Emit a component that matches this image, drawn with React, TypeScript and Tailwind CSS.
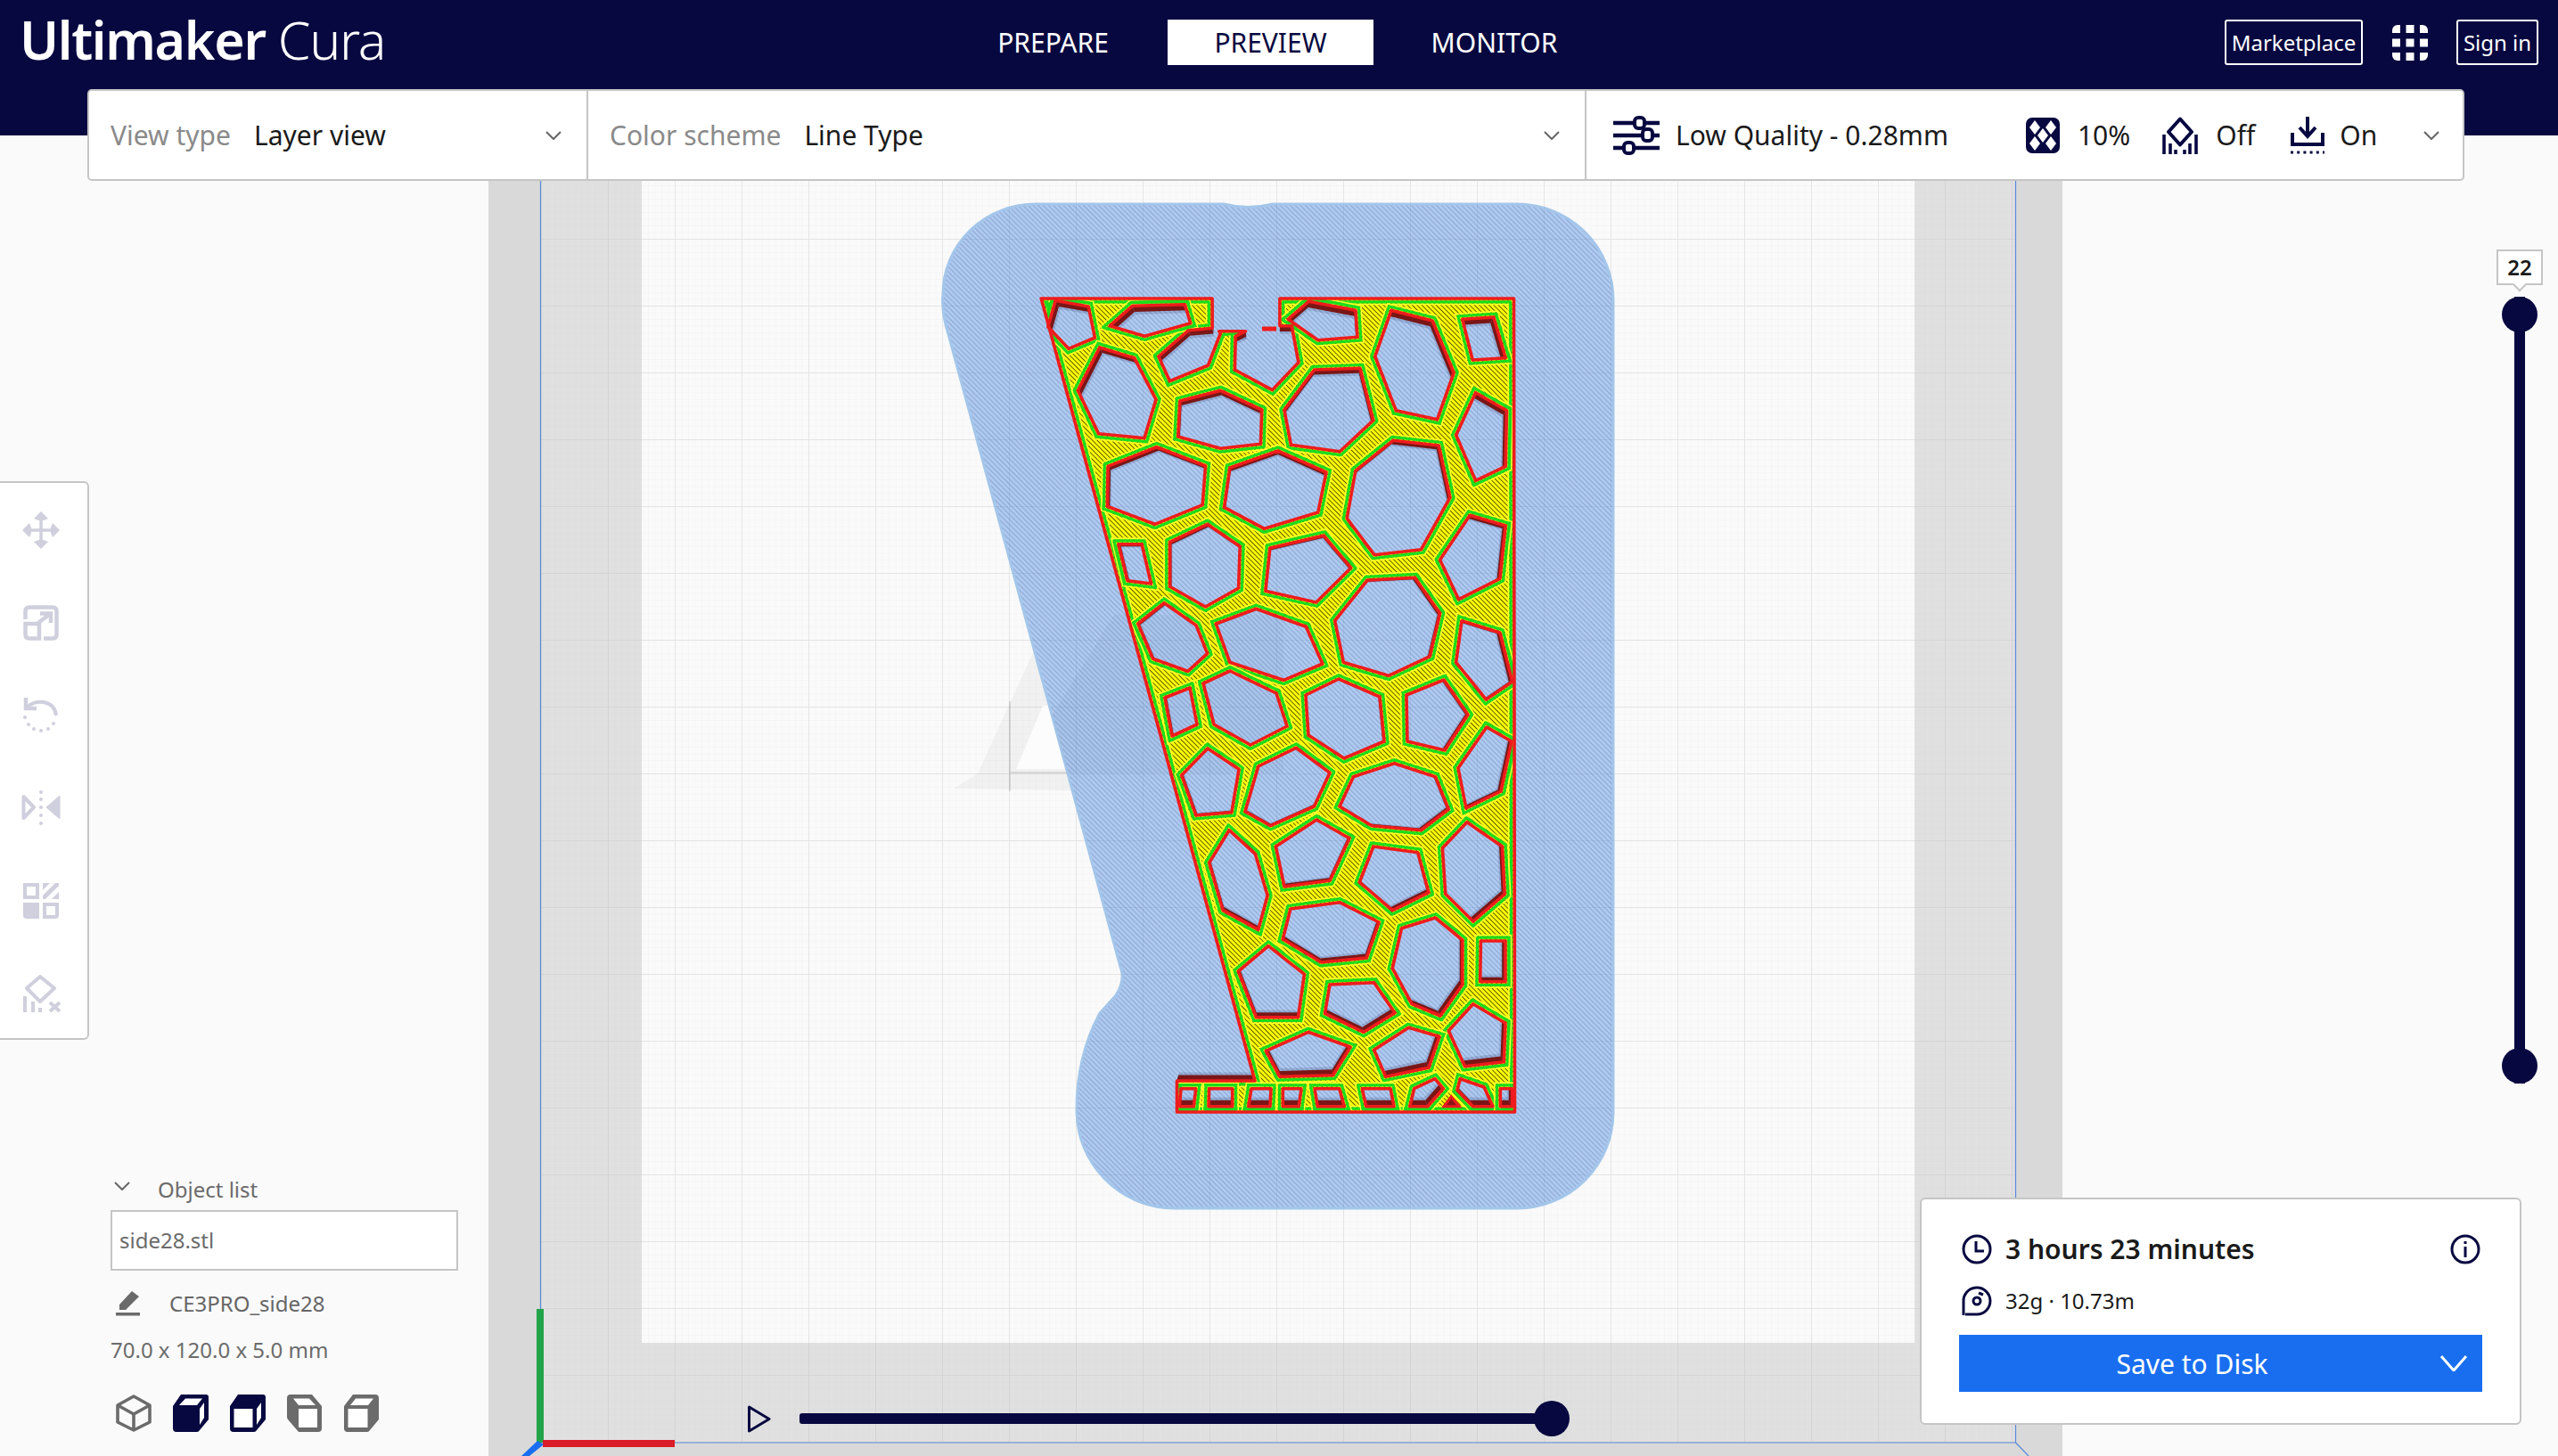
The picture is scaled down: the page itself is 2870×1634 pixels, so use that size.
import React from "react";

type Pt = number[];

const NAVY = "#070840";

// the zoomed crops had different scales, so the hole points are noted per crop
const a = (p: Pt[]) => p.map(([x, y]) => [1100 + x / 2.376, 300 + y / 3]);
const b = (p: Pt[]) => p.map(([x, y]) => [1200 + x / 2.904, 780 + y / 3]);
const c = (p: Pt[]) => p.map(([x, y]) => [1280 + x / 3, 1000 + y / 3]);

const outline: Pt[] = [
  ...a([[162, 105], [618, 105], [618, 205], [555, 212], [475, 300], [505, 383], [607, 330], [640, 222], [636, 215], [707, 215], [680, 232], [678, 345], [778, 413], [848, 320], [830, 197], [798, 197], [798, 105], [1422, 105]]),
  [1699.5, 1248], [1320.5, 1248], [1320.5, 1213], [1408, 1213],
];

const holes: Pt[][] = [
  a([[200, 112], [288, 132], [305, 237], [235, 274], [180, 200]]),
  a([[405, 130], [545, 125], [560, 188], [438, 232], [345, 197]]),
  a([[875, 115], [1000, 145], [1005, 235], [900, 245], [820, 175]]),
  a([[1095, 145], [1205, 180], [1262, 355], [1218, 512], [1108, 482], [1052, 300]]),
  a([[1285, 175], [1368, 168], [1400, 305], [1312, 312]]),
  a([[318, 270], [410, 305], [468, 445], [437, 575], [315, 560], [260, 415]]),
  a([[532, 450], [640, 415], [750, 480], [747, 595], [640, 610], [527, 570]]),
  a([[890, 345], [1012, 340], [1047, 515], [958, 620], [828, 598], [810, 480]]),
  a([[1320, 422], [1403, 482], [1400, 670], [1320, 718], [1268, 565]]),
  a([[340, 670], [470, 605], [600, 668], [592, 800], [465, 865], [338, 805]]),
  a([[665, 675], [793, 618], [922, 690], [900, 825], [757, 880], [650, 808]]),
  a([[1100, 583], [1222, 600], [1252, 775], [1175, 950], [1050, 968], [977, 845], [1000, 685]]),
  a([[368, 932], [430, 932], [455, 1065], [392, 1055]]),
  a([[505, 925], [605, 865], [692, 940], [688, 1080], [600, 1143], [505, 1075]]),
  a([[772, 945], [915, 903], [988, 1012], [895, 1128], [760, 1090]]),
  a([[1305, 835], [1400, 870], [1385, 1048], [1275, 1118], [1225, 985]]),
  a([[1032, 1053], [1158, 1045], [1225, 1165], [1198, 1310], [1088, 1375], [968, 1330], [945, 1190]]),
  a([[490, 1130], [575, 1205], [605, 1300], [553, 1360], [460, 1318], [420, 1200]]),
  a([[735, 1150], [868, 1210], [912, 1335], [808, 1390], [665, 1330], [628, 1200]]),
  a([[1283, 1190], [1385, 1230], [1418, 1395], [1348, 1455], [1268, 1330]]),
  [[1307, 783], [1335, 772], [1343, 813], [1315, 826]],
  [[1350, 767], [1380, 753], [1432, 778], [1444, 815], [1403, 836], [1362, 813]],
  [[1465, 780], [1502, 762], [1548, 782], [1553, 832], [1508, 851], [1468, 825]],
  [[1578, 780], [1620, 763], [1647, 802], [1621, 842], [1579, 832]],
  [[1668, 816], [1696, 832], [1684, 888], [1645, 907], [1636, 862]],
  b([[450, 180], [552, 250], [528, 395], [412, 405], [365, 270]]),
  b([[738, 178], [848, 262], [797, 375], [655, 440], [572, 392], [615, 240]]),
  b([[1058, 230], [1192, 275], [1235, 385], [1145, 455], [985, 440], [880, 375], [925, 275]]),
  b([[1295, 428], [1410, 510], [1418, 670], [1315, 762], [1225, 670], [1215, 515]]),
  b([[805, 420], [912, 482], [848, 625], [700, 645], [672, 510]]),
  b([[990, 510], [1135, 530], [1170, 665], [1052, 725], [945, 630]]),
  b([[520, 455], [605, 535], [645, 675], [615, 790], [500, 725], [455, 565]]),
  b([[880, 698], [1008, 765], [968, 885], [820, 900], [695, 822], [720, 720]]),
  b([[1192, 750], [1280, 825], [1280, 975], [1208, 1080], [1115, 1040], [1052, 920], [1082, 785]]),
  b([[1340, 828], [1420, 828], [1420, 965], [1338, 965]]),
  b([[648, 845], [765, 940], [745, 1085], [608, 1085], [550, 930]]),
  b([[848, 975], [992, 968], [1060, 1070], [958, 1135], [832, 1072]]),
  b([[1315, 1040], [1420, 1105], [1415, 1235], [1288, 1250], [1235, 1130]]),
  b([[778, 1135], [915, 1185], [858, 1280], [685, 1285], [640, 1198]]),
  b([[1105, 1120], [1205, 1150], [1170, 1255], [1030, 1285], [992, 1195]]),
  c([[135, 665], [185, 665], [178, 725], [130, 725]]),
  c([[230, 665], [308, 665], [308, 725], [228, 725]]),
  c([[372, 665], [438, 665], [435, 725], [362, 725]]),
  c([[478, 665], [540, 665], [532, 725], [478, 725]]),
  c([[585, 665], [668, 665], [685, 725], [595, 725]]),
  c([[745, 665], [840, 665], [852, 725], [758, 725]]),
  c([[920, 665], [990, 632], [1018, 665], [965, 725], [905, 725]]),
  c([[1075, 632], [1155, 660], [1185, 725], [1118, 725], [1065, 670]]),
  c([[1210, 665], [1250, 665], [1250, 725], [1210, 725]]),
];

function offsetPoly(pts: Pt[], d: number) {
  let area = 0;
  pts.forEach((p, i) => {
    const q = pts[(i + 1) % pts.length];
    area += p[0] * q[1] - q[0] * p[1];
  });
  const sign = area > 0 ? 1 : -1;
  const normal = (p: Pt, q: Pt) => {
    const dx = q[0] - p[0];
    const dy = q[1] - p[1];
    const len = Math.hypot(dx, dy) || 1;
    return [(sign * dy) / len, (-sign * dx) / len];
  };
  return pts.map((p, i) => {
    const n1 = normal(pts[(i - 1 + pts.length) % pts.length], p);
    const n2 = normal(p, pts[(i + 1) % pts.length]);
    const nx = n1[0] + n2[0];
    const ny = n1[1] + n2[1];
    const len = Math.hypot(nx, ny) || 1;
    const scale = d / Math.max((nx / len) * n1[0] + (ny / len) * n1[1], 0.45);
    return [p[0] + (nx / len) * scale, p[1] + (ny / len) * scale];
  });
}

const str = (p: Pt[]) => p.map((v) => `${v[0].toFixed(1)},${v[1].toFixed(1)}`).join(" ");
const pathOf = (p: Pt[]) => "M" + p.map((v) => `${v[0].toFixed(1)} ${v[1].toFixed(1)}`).join("L") + "Z";
const topLayer = [outline, ...holes].map(pathOf).join("");
const rings = [outline, ...holes];

// lower layers seen in perspective, pulled a little towards the view centre
function Walls({ k, fill }: { k: number; fill: string }) {
  const pull = (p: Pt) => [p[0] + (1440 - p[0]) * k, p[1] + (780 - p[1]) * k];
  return (
    <g fill={fill}>
      {rings.map((ring, r) =>
        ring.map((p, i) => {
          const q = ring[(i + 1) % ring.length];
          return <polygon key={`${r}-${i}`} points={str([p, q, pull(q), pull(p)])} />;
        })
      )}
    </g>
  );
}

const raftPath =
  "M1064 375 Q1056 350 1058 330 A104 101 0 0 1 1162 229 L1373 229 Q1400 236 1428 229 L1702 229 A108 108 0 0 1 1810 337 L1810 1248 A108 108 0 0 1 1702 1356 L1318 1356 A110 110 0 0 1 1208 1246 Q1208 1185 1234 1137 L1252 1117 Q1263 1100 1257 1085 Z";

function Viewport() {
  return (
    <svg className="absolute left-0 top-0" width={2870} height={1634} viewBox="0 0 2870 1634">
      <defs>
        <pattern id="minorGray" x="7" y="43" width="7.5" height="7.5" patternUnits="userSpaceOnUse">
          <path d="M0 0V7.5M0 0H7.5" stroke="#d9d9d9" strokeWidth="0.7" fill="none" />
        </pattern>
        <pattern id="majorGray" x="7" y="43" width="75" height="75" patternUnits="userSpaceOnUse">
          <path d="M0 0V75M0 0H75" stroke="#d2d2d2" strokeWidth="1.6" fill="none" />
        </pattern>
        <pattern id="minorWhite" x="7" y="43" width="7.5" height="7.5" patternUnits="userSpaceOnUse">
          <path d="M0 0V7.5M0 0H7.5" stroke="#eeeeee" strokeWidth="0.7" fill="none" />
        </pattern>
        <pattern id="majorWhite" x="7" y="43" width="75" height="75" patternUnits="userSpaceOnUse">
          <path d="M0 0V75M0 0H75" stroke="#e4e4e4" strokeWidth="1.8" fill="none" />
        </pattern>
        <pattern id="raftGrid" x="7" y="43" width="75" height="75" patternUnits="userSpaceOnUse">
          <path d="M0 0V75M0 0H75" stroke="#4a5a80" strokeWidth="1.4" fill="none" opacity="0.14" />
        </pattern>
        <pattern id="raftHatch" width="4" height="4" patternUnits="userSpaceOnUse" patternTransform="rotate(-45)">
          <rect width="4" height="4" fill="#b0cbf2" />
          <rect width="1.2" height="4" fill="#8fa9d2" />
        </pattern>
        <pattern id="infillHatch" width="3.8" height="3.8" patternUnits="userSpaceOnUse" patternTransform="rotate(-45)">
          <rect width="3.8" height="3.8" fill="#ffff00" />
          <rect width="0.8" height="3.8" fill="#3a3800" />
        </pattern>
        <clipPath id="raftClip">
          <path d={raftPath} />
        </clipPath>
        <clipPath id="topClip">
          <path d={topLayer} clipRule="evenodd" />
        </clipPath>
      </defs>

      {/* build plate */}
      <rect x="548" y="0" width="1766" height="1634" fill="#d9d9d9" />
      <rect x="606.5" y="0" width="1655" height="1619" fill="#e0e0e0" />
      <rect x="606.5" y="0" width="1655" height="1619" fill="url(#minorGray)" />
      <rect x="606.5" y="0" width="1655" height="1619" fill="url(#majorGray)" />
      <rect x="720" y="0" width="1428" height="1507" fill="#fafafa" />
      <rect x="720" y="0" width="1428" height="1507" fill="url(#minorWhite)" />
      <rect x="720" y="0" width="1428" height="1507" fill="url(#majorWhite)" />
      <polygon points="1070,885 1097,868 1160,730 1240,730 1240,888" fill="#000" opacity="0.035" />
      <polygon points="1140,863 1170,792 1240,792 1240,863" fill="#fff" opacity="0.8" />
      <path d="M1133 787V888M1133 867H1210" stroke="#000" opacity="0.14" strokeWidth="1.6" fill="none" />
      <path d="M606.5 0V1619H2261.5V0M2261.5 1619L2276 1634" stroke="#5a8ad8" strokeWidth="1.2" fill="none" />

      {/* raft */}
      <path d={raftPath} fill="url(#raftHatch)" stroke="#a4c6ea" strokeWidth="3" />
      <rect x="1040" y="220" width="780" height="1140" fill="url(#raftGrid)" clipPath="url(#raftClip)" />
      <polygon points="1140,868 1250,690 1440,690 1440,868" fill="#2a3a60" opacity="0.035" clipPath="url(#raftClip)" />

      {/* layer lines */}
      <Walls k={0.022} fill="rgba(50,60,110,0.2)" />
      <Walls k={0.015} fill="#7a1616" />
      <path d={topLayer} fill="url(#infillHatch)" fillRule="evenodd" />
      <g clipPath="url(#topClip)" fill="none" strokeLinejoin="round">
        <polygon points={str(offsetPoly(outline, -6.5))} stroke="#ffff30" strokeWidth="1.4" />
        <polygon points={str(offsetPoly(outline, -3.8))} stroke="#1cdc1c" strokeWidth="3.2" />
        {holes.map((h, i) => (
          <g key={i}>
            <polygon points={str(offsetPoly(h, 6.5))} stroke="#ffff30" strokeWidth="1.4" />
            <polygon points={str(offsetPoly(h, 3.8))} stroke="#1cdc1c" strokeWidth="3.2" />
          </g>
        ))}
      </g>
      <g fill="none" stroke="#ee1c1c" strokeWidth="3.6" strokeLinejoin="round">
        <polygon points={str(outline)} />
        {holes.map((h, i) => (
          <polygon key={i} points={str(h)} />
        ))}
      </g>
      <polygon points={str(a([[178, 118], [192, 118], [176, 150]]))} fill="#1cdc1c" />
      <polygon points={str(c([[1020, 725], [1045, 692], [1072, 725]]))} fill="#8a1616" stroke="#ee1c1c" strokeWidth="3" />
      <path d="M1416 369H1432" stroke="#ee1c1c" strokeWidth="5" />

      {/* axes */}
      <rect x="602" y="1469" width="8" height="150" fill="#22a34a" />
      <rect x="609" y="1616" width="148" height="8" fill="#da1c28" />
      <polygon points="603,1617 610,1621 594,1634 585,1634" fill="#1a6ef0" />
    </svg>
  );
}

function Chevron({ className = "", color = "#666666", w = 18, h = 10, sw = 2 }: { className?: string; color?: string; w?: number; h?: number; sw?: number }) {
  return (
    <svg className={className} width={w} height={h} viewBox={`0 0 ${w} ${h}`} fill="none">
      <path d={`M1 1L${w / 2} ${h - 1}L${w - 1} 1`} stroke={color} strokeWidth={sw} />
    </svg>
  );
}

function SlidersIcon() {
  return (
    <svg width="52" height="44" viewBox="0 0 52 44" fill="none" stroke={NAVY}>
      <path d="M0 8H24M36 8H52M0 22H31M44 22H52M0 36H12M24 36H52" strokeWidth="4.5" />
      <rect x="24" y="2" width="11" height="12" rx="4" strokeWidth="4" fill="#fff" />
      <rect x="33" y="15" width="11" height="13" rx="4" strokeWidth="4" fill="#fff" />
      <rect x="12" y="30" width="11" height="12" rx="4" strokeWidth="4" fill="#fff" />
    </svg>
  );
}

function InfillIcon() {
  return (
    <svg width="38" height="40" viewBox="0 0 38 40">
      <rect width="38" height="40" rx="7" fill={NAVY} />
      <g fill="#fff">
        <polygon points="10,3 16,11 10,19 4,11" />
        <polygon points="28,3 34,11 28,19 22,11" />
        <polygon points="19,12 25,20 19,28 13,20" />
        <polygon points="10,21 16,29 10,37 4,29" />
        <polygon points="28,21 34,29 28,37 22,29" />
      </g>
    </svg>
  );
}

function SupportIcon() {
  return (
    <svg width="40" height="42" viewBox="0 0 40 42">
      <polygon points="20,2.5 33,17 20,31.5 7,17" fill="none" stroke={NAVY} strokeWidth="4" strokeLinejoin="round" />
      <path d="M2 20V42M9 30V42M15 37V42M25 37V42M31 30V42M38 20V42" stroke={NAVY} strokeWidth="3.6" />
    </svg>
  );
}

function AdhesionIcon() {
  return (
    <svg width="40" height="42" viewBox="0 0 40 42" fill="none">
      <path d="M20 0V20" stroke={NAVY} strokeWidth="4" />
      <path d="M11 12L20 22L29 12" stroke={NAVY} strokeWidth="4" />
      <path d="M3 18V31H37V18" stroke={NAVY} strokeWidth="4" />
      <path d="M1 40H39" stroke={NAVY} strokeWidth="3" strokeDasharray="3 4.2" />
    </svg>
  );
}

function GridIcon() {
  const cells = [0, 15.5, 31];
  return (
    <svg width="40" height="40" viewBox="0 0 40 40">
      <defs>
        <clipPath id="gridRound">
          <rect width="40" height="40" rx="6" />
        </clipPath>
      </defs>
      <g fill="#fff" clipPath="url(#gridRound)">
        {cells.map((x) => cells.map((y) => <rect key={`${x}-${y}`} x={x} y={y} width="9" height="9" />))}
      </g>
    </svg>
  );
}

const TOOL = "#cfcfdd";

function MoveIcon() {
  return (
    <svg width="42" height="42" viewBox="0 0 42 42" fill="none">
      <path d="M21 6V36M6 21H36" stroke={TOOL} strokeWidth="3.5" />
      <g fill={TOOL}>
        <polygon points="21,0 29,8 24,10 18,10 13,8" />
        <polygon points="21,42 29,34 24,32 18,32 13,34" />
        <polygon points="0,21 8,13 10,18 10,24 8,29" />
        <polygon points="42,21 34,13 32,18 32,24 34,29" />
      </g>
    </svg>
  );
}

function ScaleIcon() {
  return (
    <svg width="40" height="40" viewBox="0 0 40 40" fill="none" stroke={TOOL} strokeWidth="4.5">
      <path d="M2.5 16V7Q2.5 2.5 7 2.5H33Q37.5 2.5 37.5 7V33Q37.5 37.5 33 37.5H23" />
      <path d="M2.5 21H18V37.5H7Q2.5 37.5 2.5 33Z" />
      <path d="M17 20L30 10M19 9.5H31V20" />
    </svg>
  );
}

function RotateIcon() {
  return (
    <svg width="42" height="42" viewBox="0 0 42 42" fill="none">
      <path d="M4 1V13H16" stroke={TOOL} strokeWidth="4.5" />
      <path d="M5 12C13 3 36 2 38 21" stroke={TOOL} strokeWidth="4" />
      <g fill={TOOL}>
        <circle cx="3" cy="23" r="2" />
        <circle cx="7" cy="31" r="2" />
        <circle cx="13" cy="36" r="2" />
        <circle cx="21" cy="38" r="2" />
        <circle cx="29" cy="36" r="2" />
        <circle cx="35" cy="30" r="2" />
      </g>
    </svg>
  );
}

function MirrorIcon() {
  return (
    <svg width="44" height="40" viewBox="0 0 44 40">
      <polygon points="2.5,7 14,19 2.5,31" fill="none" stroke={TOOL} strokeWidth="4" strokeLinejoin="round" />
      <polygon points="43,6 28,19 43,32" fill={TOOL} stroke={TOOL} strokeWidth="1" strokeLinejoin="round" />
      <g fill={TOOL}>
        <circle cx="22" cy="2" r="2" />
        <circle cx="22" cy="10" r="2" />
        <circle cx="22" cy="19" r="2" />
        <circle cx="22" cy="28" r="2" />
        <circle cx="22" cy="37" r="2" />
      </g>
    </svg>
  );
}

function PerModelIcon() {
  return (
    <svg width="40" height="40" viewBox="0 0 40 40" fill={TOOL}>
      <rect x="2" y="2" width="14" height="14" fill="none" stroke={TOOL} strokeWidth="4" />
      <polygon points="22,0 30,0 22,8" />
      <polygon points="36,0 40,0 40,3 25,18 22,18 22,14" />
      <polygon points="40,10 40,18 32,18" />
      <path d="M0 22H18V40H4Q0 40 0 36Z" />
      <path d="M24 24H38V36Q38 38 36 38H24Z" fill="none" stroke={TOOL} strokeWidth="4" />
    </svg>
  );
}

function BlockerIcon() {
  return (
    <svg width="42" height="42" viewBox="0 0 42 42" fill="none">
      <polygon points="19,2 35,15 19,30 4,15" stroke={TOOL} strokeWidth="4" strokeLinejoin="round" />
      <path d="M2 24V42M11 30V42M19 37V42" stroke={TOOL} strokeWidth="4" />
      <path d="M30 31L41 41M41 31L30 41" stroke={TOOL} strokeWidth="4" />
    </svg>
  );
}

function CubeOutline() {
  return (
    <svg width="40" height="42" viewBox="0 0 40 42" fill="none" stroke="#6b6b6b" strokeWidth="3.6" strokeLinejoin="round">
      <polygon points="20,2 38,12 38,31 20,40 2,31 2,12" />
      <path d="M2 12L20 22L38 12M20 22V40" />
    </svg>
  );
}

function CubeSolid() {
  return (
    <svg width="40" height="42" viewBox="0 0 40 42">
      <path d="M9 0H37Q40 0 40 3V28L30 40Q29 42 27 42H4Q0 42 0 38V13Z" fill={NAVY} />
      <polygon points="14,4.5 33,4.5 27,12 7,12" fill="#fff" />
      <polygon points="35,9 35,26 30,34 30,16" fill="#fff" />
    </svg>
  );
}

function CubeFront() {
  return (
    <svg width="40" height="42" viewBox="0 0 40 42">
      <path d="M9 0H37Q40 0 40 3V28L30 40Q29 42 27 42H4Q0 42 0 38V13Z" fill={NAVY} />
      <rect x="4.5" y="16" width="21" height="21" fill="#fff" />
      <polygon points="35,9 35,26 30,34 30,16" fill="#fff" />
    </svg>
  );
}

function CubeLeft() {
  return (
    <svg width="40" height="42" viewBox="0 0 40 42">
      <path d="M4 0H28L39 13V38Q39 42 35 42H13L1 28Q0 27 0 25V4Q0 0 4 0Z" fill="#6b6b6b" />
      <rect x="13" y="16" width="21" height="21" fill="#fff" />
      <polygon points="7,4.5 25,4.5 32,12 13,12" fill="#fff" />
    </svg>
  );
}

function CubeRight() {
  return (
    <svg width="40" height="42" viewBox="0 0 40 42">
      <path d="M10 0H35Q39 0 39 4V28L29 40Q28 42 26 42H4Q0 42 0 38V13Z" fill="#6b6b6b" />
      <rect x="4.5" y="16" width="22" height="21" fill="#fff" />
      <polygon points="13,4.5 33,4.5 27,12 7,12" fill="#fff" />
    </svg>
  );
}

export default function App() {
  return (
    <div className="relative w-[2870px] h-[1634px] overflow-hidden bg-[#fafafa] font-['Noto_Sans',sans-serif] text-[#1a1a1a]">
      <Viewport />

      {/* Header with the stage tabs */}
      <header className="relative h-[152px] bg-[#070840]">
        <div className="flex h-[95px] items-center text-white">
          <div className="w-[1066px] pl-[22px] pb-[6px] text-[59px] leading-none tracking-[-1.3px]">
            <span className="font-semibold">Ultimaker</span> <span className="font-light">Cura</span>
          </div>
          <div className="flex items-center text-[30px]">
            <div className="flex h-[51px] w-[231px] items-center justify-center">PREPARE</div>
            <div className="ml-[13px] flex h-[51px] w-[231px] items-center justify-center bg-white text-[#070840]">PREVIEW</div>
            <div className="ml-[20px] flex h-[51px] w-[231px] items-center justify-center">MONITOR</div>
          </div>
          <div className="ml-auto flex items-center pr-[22px] text-[24px]">
            <div className="flex h-[51px] w-[155px] items-center justify-center rounded-[3px] border-2 border-white">Marketplace</div>
            <div className="ml-[33px]">
              <GridIcon />
            </div>
            <div className="ml-[32px] flex h-[51px] w-[92px] items-center justify-center rounded-[3px] border-2 border-white">Sign in</div>
          </div>
        </div>

        {/* Toolbar */}
        <div className="ml-[98px] mt-[5px] flex h-[103px] w-[2667px] items-center rounded-[5px] border-2 border-[#c5c5c5] bg-white text-[30px]">
          <div className="flex h-full w-[560px] items-center border-r-2 border-[#c5c5c5] pl-[24px]">
            <span className="text-[#8a8a8a]">View type</span>
            <span className="ml-[26px]">Layer view</span>
            <Chevron className="ml-auto mr-[28px]" />
          </div>
          <div className="flex h-full w-[1120px] items-center border-r-2 border-[#c5c5c5] pl-[24px]">
            <span className="text-[#8a8a8a]">Color scheme</span>
            <span className="ml-[26px]">Line Type</span>
            <Chevron className="ml-auto mr-[28px]" />
          </div>
          <div className="flex flex-1 items-center pl-[30px]">
            <SlidersIcon />
            <span className="ml-[18px]">Low Quality - 0.28mm</span>
            <div className="ml-[87px]">
              <InfillIcon />
            </div>
            <span className="ml-[20px]">10%</span>
            <div className="ml-[36px]">
              <SupportIcon />
            </div>
            <span className="ml-[20px]">Off</span>
            <div className="ml-[39px]">
              <AdhesionIcon />
            </div>
            <span className="ml-[16px]">On</span>
            <Chevron className="ml-[52px]" />
          </div>
        </div>
      </header>

      <main className="relative flex h-[1482px]">
        {/* Left column: tools and object list */}
        <div className="flex w-[547px] flex-col">
          <div className="mt-[388px] flex h-[627px] w-[100px] flex-col items-center gap-[62px] rounded-r-[6px] border-y-2 border-r-2 border-[#c5c5c5] bg-white pt-[32px]">
            <div className="-ml-[6px] flex h-[42px] items-center justify-center">
              <MoveIcon />
            </div>
            <div className="-ml-[6px] flex h-[42px] items-center justify-center">
              <ScaleIcon />
            </div>
            <div className="-ml-[6px] flex h-[42px] items-center justify-center">
              <RotateIcon />
            </div>
            <div className="-ml-[6px] flex h-[42px] items-center justify-center">
              <MirrorIcon />
            </div>
            <div className="-ml-[6px] flex h-[42px] items-center justify-center">
              <PerModelIcon />
            </div>
            <div className="-ml-[4px] flex h-[42px] items-center justify-center">
              <BlockerIcon />
            </div>
          </div>

          <div className="mt-auto w-[390px] ml-[124px] pb-[27px] text-[24px] text-[#6b6b6b]">
            <div className="flex h-[34px] items-center">
              <Chevron className="ml-[4px] mb-[8px]" />
              <span className="ml-[31px]">Object list</span>
            </div>
            <div className="mt-[6px] flex h-[68px] items-center border-2 border-[#c5c5c5] bg-white pl-[8px]">side28.stl</div>
            <div className="mt-[20px] flex h-[34px] items-center">
              <svg className="ml-[4px]" width="30" height="28" viewBox="0 0 30 28" fill="#6b6b6b">
                <polygon points="20,0 28,6 13,21 6,21 6,15" />
                <rect x="2" y="24" width="27" height="3.5" />
              </svg>
              <span className="ml-[32px] text-[#666666]">CE3PRO_side28</span>
            </div>
            <div className="mt-[18px] leading-[34px]">70.0 x 120.0 x 5.0 mm</div>
            <div className="mt-[33px] flex gap-[24px] pl-[6px]">
              <CubeOutline />
              <CubeSolid />
              <CubeFront />
              <CubeLeft />
              <CubeRight />
            </div>
          </div>
        </div>

        {/* Centre: layer playback */}
        <div className="flex flex-1 flex-col justify-end pb-[22px]">
          <div className="ml-[292px] flex h-[40px] items-center">
            <svg width="26" height="31" viewBox="0 0 26 31" fill="none">
              <polygon points="1.5,2 24,15.5 1.5,29" stroke={NAVY} strokeWidth="3" strokeLinejoin="round" />
            </svg>
            <div className="relative ml-[32px] h-[12px] w-[844px] rounded-l-[3px] bg-[#070840]">
              <div className="absolute -top-[14px] -right-[20px] h-[40px] w-[40px] rounded-full bg-[#070840]" />
            </div>
          </div>
        </div>

        {/* Right: layer slider and print result */}
        <div className="flex w-[716px] flex-col items-end">
          <div className="mr-[17px] mt-[128px] flex w-[52px] flex-col items-center">
            <div className="relative flex h-[40px] w-[52px] items-center justify-center border-2 border-[#c5c5c5] bg-white text-[24px] font-semibold leading-none">
              22
              <div className="absolute -bottom-[7px] left-[18px] h-[12px] w-[12px] rotate-45 border-b-2 border-r-2 border-[#c5c5c5] bg-white" />
            </div>
            <div className="relative mt-[13px] h-[883px] w-[12px] bg-[#070840]">
              <div className="absolute -left-[14px] top-0 h-[40px] w-[40px] rounded-full bg-[#070840]" />
              <div className="absolute -left-[14px] bottom-0 h-[40px] w-[40px] rounded-full bg-[#070840]" />
            </div>
          </div>

          <div className="mt-auto mb-[35px] mr-[41px] h-[255px] w-[675px] rounded-[6px] border-2 border-[#c5c5c5] bg-white px-[42px] pt-[39px]">
            <div className="flex h-[34px] items-center">
              <svg className="ml-[3px]" width="34" height="34" viewBox="0 0 34 34" fill="none" stroke={NAVY} strokeWidth="3">
                <circle cx="17" cy="17" r="15" />
                <path d="M16 8V19H25" />
              </svg>
              <span className="ml-[15px] text-[30px] font-semibold leading-none">3 hours 23 minutes</span>
              <svg className="ml-auto mr-[2px]" width="34" height="34" viewBox="0 0 34 34" fill="none" stroke={NAVY} strokeWidth="3">
                <circle cx="17" cy="17" r="15" />
                <path d="M17 14V26M17 8V11" />
              </svg>
            </div>
            <div className="mt-[24px] flex h-[34px] items-center">
              <svg className="ml-[3px]" width="34" height="34" viewBox="0 0 34 34" fill="none" stroke={NAVY} strokeWidth="3">
                <path d="M2 33V18A15 15 0 1 1 17 32H4" />
                <circle cx="17" cy="17" r="4" />
                <path d="M19 8L24 10" />
              </svg>
              <span className="ml-[15px] text-[24px] leading-none">32g · 10.73m</span>
            </div>
            <div className="mt-[21px] flex h-[64px] items-center bg-[#196ef0] text-white">
              <div className="flex-1 text-center text-[30px]">Save to Disk</div>
              <div className="flex w-[64px] justify-center">
                <Chevron color="#ffffff" w={30} h={18} sw={3} />
              </div>
            </div>
          </div>
        </div>
      </main>
    </div>
  );
}
